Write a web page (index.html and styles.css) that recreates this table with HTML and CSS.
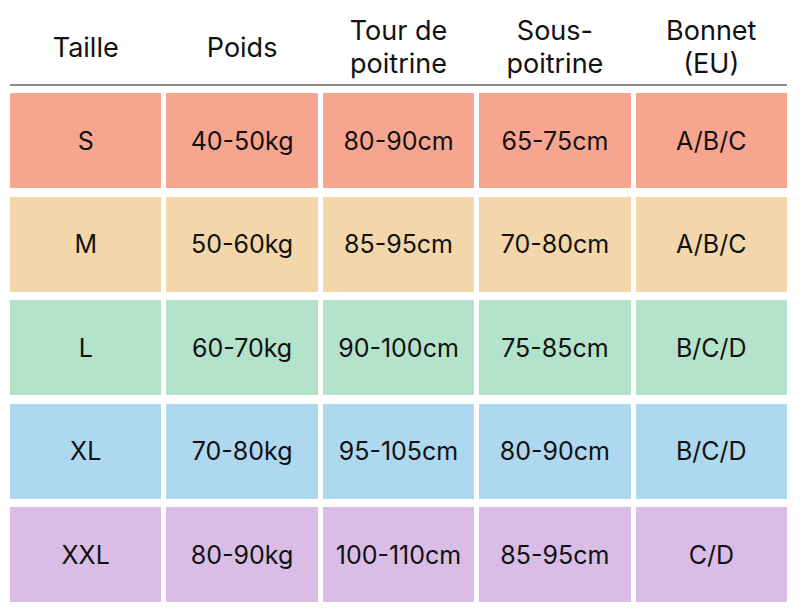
FILE: index.html
```html
<!DOCTYPE html>
<html lang="fr">
<head>
<meta charset="utf-8">
<title>Guide des tailles</title>
<link rel="stylesheet" href="styles.css">
</head>
<body>
<div class="chart">
  <div class="head">
    <div class="hcell">Taille</div>
    <div class="hcell">Poids</div>
    <div class="hcell">Tour de<br>poitrine</div>
    <div class="hcell">Sous-<br>poitrine</div>
    <div class="hcell">Bonnet<br>(EU)</div>
  </div>
  <div class="rule"></div>
  <div class="body">
    <div class="row s"><div class="cell">S</div><div class="cell">40-50kg</div><div class="cell">80-90cm</div><div class="cell">65-75cm</div><div class="cell">A/B/C</div></div>
    <div class="row m"><div class="cell">M</div><div class="cell">50-60kg</div><div class="cell">85-95cm</div><div class="cell">70-80cm</div><div class="cell">A/B/C</div></div>
    <div class="row l"><div class="cell">L</div><div class="cell">60-70kg</div><div class="cell">90-100cm</div><div class="cell">75-85cm</div><div class="cell">B/C/D</div></div>
    <div class="row xl"><div class="cell">XL</div><div class="cell">70-80kg</div><div class="cell">95-105cm</div><div class="cell">80-90cm</div><div class="cell">B/C/D</div></div>
    <div class="row xxl"><div class="cell">XXL</div><div class="cell">80-90kg</div><div class="cell">100-110cm</div><div class="cell">85-95cm</div><div class="cell">C/D</div></div>
  </div>
</div>
</body>
</html>
```
FILE: styles.css
```css
html, body {
  margin: 0;
  padding: 0;
  background: #ffffff;
}
body {
  font-family: "Inter", "Noto Sans", sans-serif;
  color: #111111;
}
.chart {
  width: 777px;
  margin-left: 10px;
  display: flex;
  flex-direction: column;
}
.head {
  height: 84px;
  display: grid;
  grid-template-columns: repeat(5, 1fr);
  column-gap: 5px;
  align-items: center;
}
.hcell {
  text-align: center;
  font-size: 27px;
  line-height: 33px;
  font-weight: 400;
  padding-top: 10px;
}
.rule {
  height: 2px;
  background: #8c8c8c;
}
.body {
  margin-top: 7px;
  display: flex;
  flex-direction: column;
  gap: 8.5px;
}
.row {
  display: grid;
  grid-template-columns: repeat(5, 1fr);
  column-gap: 5px;
  height: 95px;
}
.cell {
  display: flex;
  align-items: center;
  justify-content: center;
  font-size: 25px;
}
.s .cell { background: #f8a590; }
.m .cell { background: #f3d6aa; }
.l .cell { background: #b3e4cb; }
.xl .cell { background: #add8f0; }
.xxl .cell { background: #dabde6; }
```
